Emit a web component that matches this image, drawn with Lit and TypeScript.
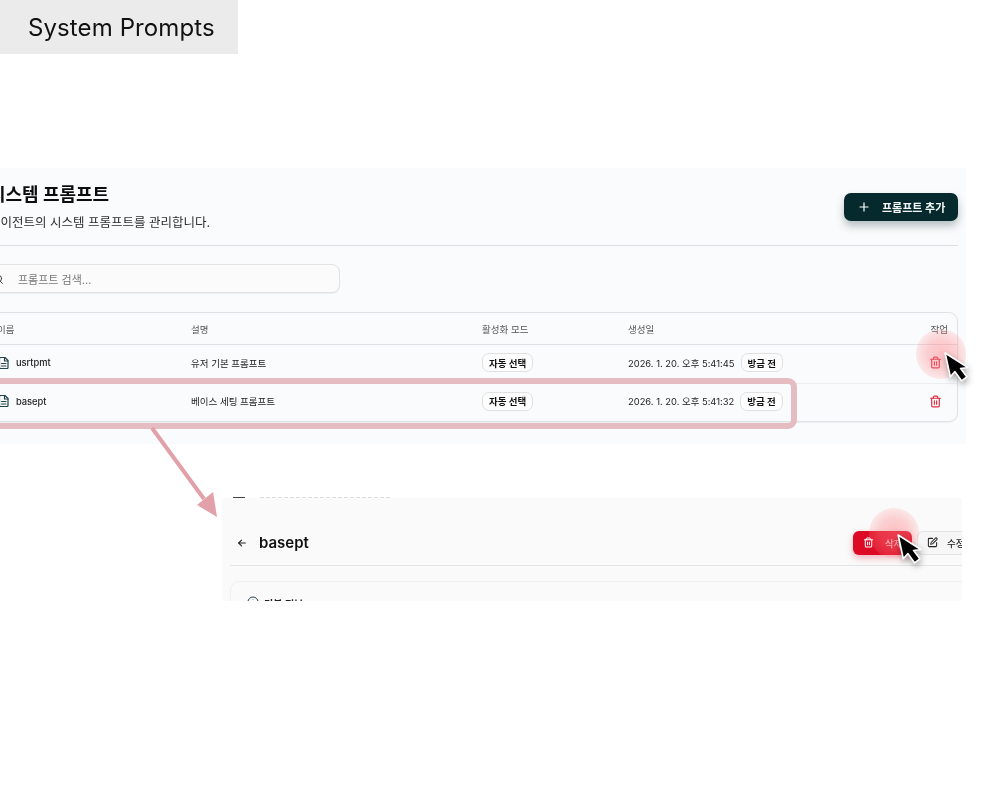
import { LitElement, html, css, svg } from "lit";
import { customElement } from "lit/decorators.js";

const trash = (size: number, color: string) => html`<svg width=${size} height=${size} viewBox="0 0 24 24" fill="none" stroke=${color} stroke-width="2.2" stroke-linecap="round" stroke-linejoin="round"><path d="M3 6h18"/><path d="M19 6v14a2 2 0 0 1-2 2H7a2 2 0 0 1-2-2V6"/><path d="M8 6V4a2 2 0 0 1 2-2h4a2 2 0 0 1 2 2v2"/><path d="M10 11v6"/><path d="M14 11v6"/></svg>`;

const fileIcon = html`<svg width="11" height="12" viewBox="0 0 22 24" fill="none" stroke="#24434a" stroke-width="2.4" stroke-linejoin="round" stroke-linecap="round"><path d="M3 3a2 2 0 0 1 2-2h9l6 6v14a2 2 0 0 1-2 2H5a2 2 0 0 1-2-2z"/><path d="M13 1v7h7"/><path d="M7 13h9"/><path d="M7 18h9"/></svg>`;

const cursor = (cls: string) => html`<svg class=${cls} width="25" height="31" viewBox="0 0 24 30"><path d="M1 1 L6 24 L10.5 19 L17 28 L22 24 L16 16 L23 15 Z" fill="#000" stroke="#fff" stroke-width="1.6" stroke-linejoin="round"/></svg>`;

@customElement("app-root")
export class AppRoot extends LitElement {
  static styles = css`
    :host { display: block; width: 982px; height: 804px; position: relative; overflow: hidden; background: #fff; font-family: Inter, "Noto Sans CJK KR", sans-serif; color: #111; }
    .chip { width: 238px; height: 54px; box-sizing: border-box; background: #ebebeb; padding-left: 28px; display: flex; align-items: center; font-size: 24px; color: #111; letter-spacing: 0.1px; filter: blur(0.25px); }
    .panel { position: relative; margin-top: 114px; width: 966px; height: 276px; background: #fafbfc; overflow: hidden; filter: blur(0.45px); }
    .inner { margin-left: -24px; width: 982px; padding-top: 15px; }
    .head { display: flex; justify-content: space-between; align-items: flex-start; height: 62px; border-bottom: 1px solid #dcdee1; }
    .left { padding-left: 13px; }
    .title { font-size: 18px; font-weight: 700; line-height: 24px; color: #0d0d0d; }
    .sub { font-size: 12.5px; line-height: 18px; margin-top: 7px; color: #2c2c2c; }
    .add { margin-top: 10px; width: 114px; height: 28px; box-sizing: border-box; background: #05292d; color: #f4f6f6; border-radius: 7px; display: flex; align-items: center; gap: 13px; padding-left: 15px; font-size: 11px; font-weight: 700; box-shadow: 0 5px 9px rgba(5, 40, 44, .28); }
    .search { margin-top: 18px; width: 364px; height: 29px; box-sizing: border-box; border: 1px solid #e1e3e5; border-radius: 8px; background: #fafbfa; display: flex; align-items: center; gap: 14px; padding-left: 15px; font-size: 11px; color: #777; box-shadow: 0 1px 1px rgba(0,0,0,.06); }
    .table { margin-top: 19px; width: 982px; height: 110px; box-sizing: border-box; border: 1px solid #dfe1e4; border-radius: 9px; box-shadow: 0 1px 1px rgba(0,0,0,.05); }
    .row { display: grid; grid-template-columns: 191px 291px 146px 1fr 40px; align-items: center; height: 38px; padding-left: 23px; padding-bottom: 3px; font-size: 9.5px; color: #222; border-top: 1px solid #eceef0; box-sizing: border-box; }
    .row.hd { height: 32px; border-top: 0; padding-bottom: 0; color: #555; border-bottom: 1px solid #dfe1e4; }
    .row.first { border-top: 0; }
    .hname { margin-left: -3px; }
    .name { display: flex; align-items: center; gap: 7px; margin-left: -2px; font-size: 9.3px; font-weight: 500; }
    .tag { display: inline-flex; align-items: center; height: 17px; padding: 0 6px; border: 1px solid #e0e1e3; border-radius: 7px; font-size: 9.5px; font-weight: 700; color: #111; background: #fdfdfd; }
    .created { display: flex; align-items: center; gap: 6px; font-size: 9.4px; }
    .act { display: flex; justify-content: flex-end; padding-right: 15px; }
    .act.h { padding-right: 9px; }
    .hl { position: absolute; left: -8px; top: 378px; width: 805px; height: 51px; box-sizing: border-box; border: 6px solid #e4bcc1; border-radius: 9px; }
    .arrow { position: absolute; left: 140px; top: 420px; }
    .halo { position: absolute; border-radius: 50%; background: radial-gradient(circle, rgba(255,125,130,.46) 0, rgba(255,130,135,.36) 40%, rgba(255,140,145,.14) 75%, rgba(255,140,145,0) 100%); }
    .halo.a { left: 916px; top: 329px; width: 50px; height: 50px; }
    .halo.b { left: 869px; top: 508px; width: 50px; height: 50px; }
    .cur { position: absolute; filter: drop-shadow(1px 3px 3px rgba(0,0,0,.35)) blur(0.3px); }
    .cur.a { left: 944px; top: 352px; }
    .cur.b { left: 897px; top: 534px; }
    .bits { position: absolute; left: 233px; top: 497px; height: 1px; width: 160px; display: flex; gap: 15px; filter: blur(0.5px); }
    .bits i { display: block; height: 1px; }
    .bits .k { width: 12px; background: #444; }
    .bits .g { width: 130px; background: repeating-linear-gradient(90deg, #ddd 0 4px, transparent 4px 6px); }
    .panel2 { position: absolute; left: 222px; top: 498px; width: 740px; height: 103px; background: #fafafa; overflow: hidden; filter: blur(0.45px); }
    .bar { display: flex; align-items: center; margin: 0 -27px 0 8px; height: 68px; padding: 22px 0 0 7px; box-sizing: border-box; border-bottom: 1px solid #e3e5e7; }
    .back { margin-right: 12px; display: flex; }
    .h2 { font-size: 15px; font-weight: 600; color: #111; flex: 1; }
    .btn { height: 24px; box-sizing: border-box; border-radius: 6px; display: flex; align-items: center; font-size: 9.5px; font-weight: 500; flex: none; }
    .del { width: 59px; background: #dc0a24; color: #ffc4c8; padding-left: 10px; gap: 11px; box-shadow: 0 3px 7px rgba(220,10,36,.3); }
    .edit { width: 72px; margin-left: 5px; background: #f6f6f6; border: 1px solid #e2e2e2; color: #222; padding-left: 9px; gap: 9px; }
    .card { margin: 15px -20px 0 8px; height: 60px; border: 1px solid #eef0f1; border-radius: 9px; padding: 14px 0 0 16px; display: flex; align-items: flex-start; gap: 5px; font-size: 10px; font-weight: 600; color: #222; box-sizing: border-box; }
  `;

  private row(name: string, desc: string, time: string, first: boolean) {
    return html`<div class="row ${first ? "first" : ""}">
      <div class="name">${fileIcon}<span>${name}</span></div>
      <div>${desc}</div>
      <div><span class="tag">자동 선택</span></div>
      <div class="created"><span>${time}</span><span class="tag">방금 전</span></div>
      <div class="act">${trash(13, "#dd3344")}</div>
    </div>`;
  }

  render() {
    return html`
      <div class="chip">System Prompts</div>
      <section class="panel">
        <div class="inner">
          <div class="head">
            <div class="left">
              <div class="title">시스템 프롬프트</div>
              <div class="sub">에이전트의 시스템 프롬프트를 관리합니다.</div>
            </div>
            <div class="add">
              <svg width="10" height="10" viewBox="0 0 10 10" stroke="#fff" stroke-width="1.2"><path d="M5 0.5v9M0.5 5h9"/></svg>
              <span>프롬프트 추가</span>
            </div>
          </div>
          <div class="search">
            <svg width="12" height="12" viewBox="0 0 24 24" fill="none" stroke="#444" stroke-width="2" stroke-linecap="round"><circle cx="11" cy="11" r="8"/><path d="m21 21-4.3-4.3"/></svg>
            <span>프롬프트 검색...</span>
          </div>
          <div class="table">
            <div class="row hd"><div class="hname">이름</div><div>설명</div><div>활성화 모드</div><div>생성일</div><div class="act h">작업</div></div>
            ${this.row("usrtpmt", "유저 기본 프롬프트", "2026. 1. 20. 오후 5:41:45", true)}
            ${this.row("basept", "베이스 세팅 프롬프트", "2026. 1. 20. 오후 5:41:32", false)}
          </div>
        </div>
      </section>

      <div class="bits"><i class="k"></i><i class="g"></i></div>
      <section class="panel2">
        <div class="bar">
          <span class="back"><svg width="10" height="10" viewBox="0 0 24 24" fill="none" stroke="#222" stroke-width="2.6" stroke-linecap="round" stroke-linejoin="round"><path d="M20 12H4"/><path d="m11 5-7 7 7 7"/></svg></span>
          <span class="h2">basept</span>
          <div class="btn del">${trash(11, "#fff")}<span>삭제</span></div>
          <div class="btn edit">
            <svg width="11" height="11" viewBox="0 0 24 24" fill="none" stroke="#222" stroke-width="2.2" stroke-linecap="round" stroke-linejoin="round"><path d="M12 3H5a2 2 0 0 0-2 2v14a2 2 0 0 0 2 2h14a2 2 0 0 0 2-2v-7"/><path d="M18.4 2.6a2.1 2.1 0 1 1 3 3L12 15l-4 1 1-4z"/></svg>
            <span>수정</span>
          </div>
        </div>
        <div class="card">
          <svg width="12" height="12" viewBox="0 0 24 24" fill="none" stroke="#24434a" stroke-width="2"><circle cx="12" cy="12" r="10"/><path d="M12 11v6M12 7v1"/></svg>
          <span>기본 정보</span>
        </div>
      </section>

      <div class="hl"></div>
      <svg class="arrow" width="90" height="100" viewBox="0 0 90 100">
        ${svg`<path d="M12 8 L64 79" stroke="#e2a1a9" stroke-width="4" fill="none"/><path d="M77 97 L57 85 L73 72 Z" fill="#e2a1a9"/>`}
      </svg>
      <div class="halo a"></div>
      <div class="halo b"></div>
      ${cursor("cur a")}
      ${cursor("cur b")}
    `;
  }
}
